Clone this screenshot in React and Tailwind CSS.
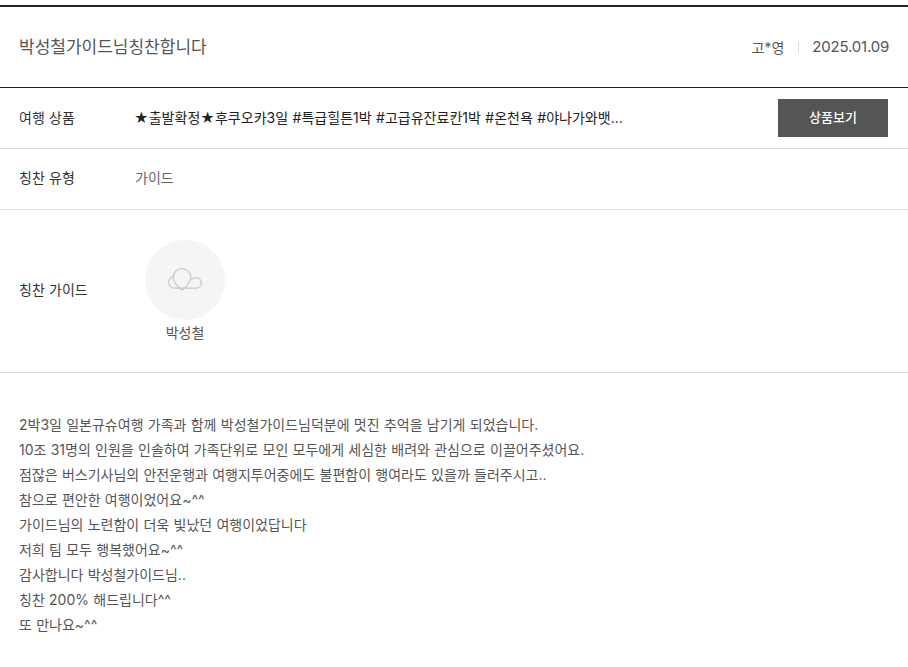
function Row({ label, children, className = "", labelClass = "" }) {
  return (
    <div className={`flex items-center border-b border-[#dddddd] ${className}`}>
      <div className={`w-[135px] shrink-0 pl-[19px] text-[14px] text-[#333333] ${labelClass}`}>{label}</div>
      {children}
    </div>
  );
}

const lines = [
  "2박3일 일본규슈여행 가족과 함께 박성철가이드님덕분에 멋진 추억을 남기게 되었습니다.",
  "10조 31명의 인원을 인솔하여 가족단위로 모인 모두에게 세심한 배려와 관심으로 이끌어주셨어요.",
  "점잖은 버스기사님의 안전운행과 여행지투어중에도 불편함이 행여라도 있을까 들러주시고..",
  "참으로 편안한 여행이었어요~^^",
  "가이드님의 노련함이 더욱 빛났던 여행이었답니다",
  "저희 팀 모두 행복했어요~^^",
  "감사합니다 박성철가이드님..",
  "칭찬 200% 해드립니다^^",
  "또 만나요~^^",
];

export default function App() {
  return (
    <div className="h-[667px] w-[908px] overflow-hidden bg-white pt-[5px] font-['Inter','Noto_Sans_CJK_KR',sans-serif] [word-spacing:0.35px]">
      <div className="flex h-[82px] items-center justify-between border-t-2 border-[#222222] px-[19px]">
        <div className="pt-[2px] text-[17px] text-[#555555]">박성철가이드님칭찬합니다</div>
        <div className="flex items-center text-[14px] text-[#555555]">
          <span className="pr-px">고*영</span>
          <span className="mx-[13px] h-[11px] w-px bg-[#dddddd]" />
          <span className="text-[15px] tracking-[-0.2px]">2025.01.09</span>
        </div>
      </div>
      <div className="h-px bg-[#222222]" />
      <Row label="여행 상품" className="h-[61px]" labelClass="pb-[2px]">
        <div className="ml-[-1px] flex-1 truncate pb-[2px] text-[14px] tracking-[0.03px] text-[#222222]">★출발확정★후쿠오카3일 #특급힐튼1박 #고급유잔료칸1박 #온천욕 #야나가와뱃...</div>
        <button className="mr-[20px] ml-auto h-[38px] w-[110px] shrink-0 bg-[#555555] text-[13px] font-medium text-white">상품보기</button>
      </Row>
      <Row label="칭찬 유형" className="h-[61px]" labelClass="pb-[4px]">
        <div className="pb-[4px] text-[14px] text-[#666666]">가이드</div>
      </Row>
      <Row label="칭찬 가이드" className="h-[163px]" labelClass="pb-[4px]">
        <div className="ml-[10px] flex flex-col items-center">
          <div className="flex h-[80px] w-[80px] items-center justify-center rounded-full bg-[#f5f5f5]">
            <svg width="34" height="23" viewBox="0 0 34 23" fill="none" stroke="#c8c8c8" strokeWidth="1.2">
              <path d="M6.5 8.2C3 9 0.7 11.3 0.7 14.3C0.7 17.8 3.3 20.2 6.5 20.2H28.5C31.5 20.2 33.4 17.8 33.4 15.2C33.4 12 31 9.6 28 9.6C26.3 9.6 24.8 10.2 23 11.5" />
              <path d="M14 0.7C9 0.7 5.2 4.5 5.2 9.2C5.2 15 10.5 19 14 22.4C17.5 19 22.8 15 22.8 9.2C22.8 4.5 19 0.7 14 0.7Z" />
            </svg>
          </div>
          <div className="mt-[3px] text-[14px] leading-[20px] text-[#555555]">박성철</div>
        </div>
      </Row>
      <div className="pt-[39px] pl-[19px] text-[14px] leading-[25px] text-[#555555]">
        {lines.map((l) => (
          <div key={l}>{l}</div>
        ))}
      </div>
    </div>
  );
}
